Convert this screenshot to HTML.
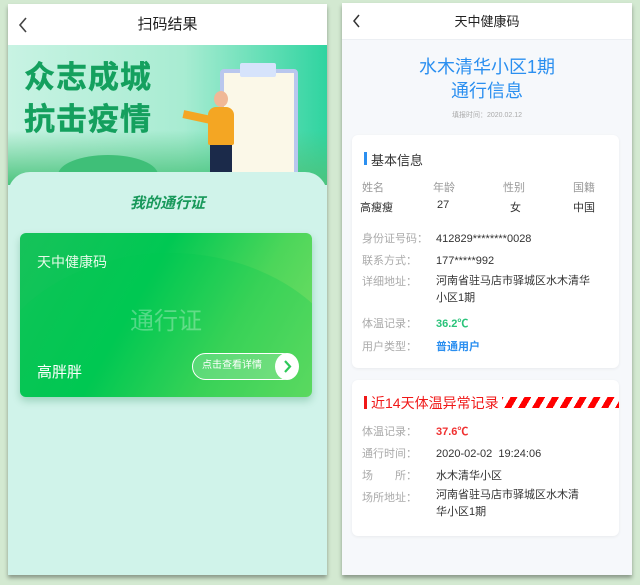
<!DOCTYPE html>
<html><head><meta charset="utf-8"><style>
*{margin:0;padding:0;box-sizing:border-box}
body{width:640px;height:585px;background:#d3e9d1;position:relative;overflow:hidden;font-family:"Liberation Sans","Noto Sans CJK SC",sans-serif}
.ph{position:absolute;box-shadow:0 3px 4px rgba(0,0,0,.35)}
.abs{position:absolute}
</style></head><body>
<!-- Left phone -->
<div class="ph" style="left:8px;top:4px;width:319px;height:571px;background:#d0f3ea;overflow:hidden">
  <div class="abs" style="left:0;top:0;width:319px;height:41px;background:#fff;text-align:center;line-height:41px;font-size:15px;color:#222">扫码结果
    <svg class="abs" style="left:10px;top:13px" width="10" height="16"><path d="M8 1L2 8L8 15" stroke="#444" stroke-width="1.6" fill="none"/></svg>
  </div>
  <div class="abs" style="left:0;top:41px;width:319px;height:140px;background:linear-gradient(90deg,#c8f3e3 0%,#a8ecd2 55%,#2fd4a0 100%)">
    <div class="abs" style="left:0;top:85px;width:319px;height:55px;background:linear-gradient(180deg,rgba(60,190,120,.0),#4cc47e)"></div>
    <div class="abs" style="left:16px;top:12px;font-size:31px;font-weight:bold;color:#14a05e;line-height:42px;letter-spacing:1px;-webkit-text-stroke:0.4px #14a05e">众志成城<br>抗击疫情</div>
    <div class="abs" style="left:212px;top:24px;width:78px;height:108px;background:#fbf8e8;border:4px solid #b9c7ee;border-radius:4px"></div>
    <div class="abs" style="left:232px;top:18px;width:36px;height:14px;background:#d6e3fb;border-radius:2px"></div>
    <div class="abs" style="left:200px;top:62px;width:26px;height:38px;background:#f4a623;border-radius:8px 8px 2px 2px"></div>
    <div class="abs" style="left:206px;top:46px;width:14px;height:16px;background:#f0b896;border-radius:50%"></div>
    <div class="abs" style="left:202px;top:100px;width:22px;height:40px;background:#1b2a4a"></div>
    <div class="abs" style="left:175px;top:68px;width:28px;height:8px;background:#f4a623;transform:rotate(12deg)"></div>
    <div class="abs" style="left:50px;top:110px;width:100px;height:40px;background:#3fbf78;border-radius:50% 50% 0 0"></div>
  </div>
  <div class="abs" style="left:0;top:168px;width:319px;height:410px;background:#d0f3ea;border-radius:22px 22px 0 0"></div>
  <div class="abs" style="left:0;top:188px;width:319px;text-align:center;font-size:15px;font-weight:bold;font-style:italic;color:#17985a">我的通行证</div>
  <div class="abs" style="left:12px;top:229px;width:292px;height:164px;border-radius:6px;background:linear-gradient(120deg,#17c25a 0%,#00c853 40%,#4cd65a 70%,#7adf66 100%);box-shadow:0 4px 8px rgba(0,120,60,.25);overflow:hidden">
    <div class="abs" style="left:-40px;top:20px;width:380px;height:300px;border-radius:50%;background:rgba(0,200,80,.25)"></div>
    <div class="abs" style="left:17px;top:19px;font-size:14px;color:#e6fbe9">天中健康码</div>
    <div class="abs" style="left:0;top:68px;width:292px;text-align:center;font-size:24px;color:rgba(255,255,255,.3)">通行证</div>
    <div class="abs" style="left:17px;top:128px;font-size:15px;color:#fff">高胖胖</div>
    <div class="abs" style="left:172px;top:120px;width:104px;height:27px;border:1.5px solid #fff;border-radius:14px;background:rgba(255,255,255,.2);font-size:10px;color:#fff;line-height:24px;padding-left:9px">点击查看详情</div>
    <div class="abs" style="left:255px;top:120px;width:24px;height:27px;border-radius:50%;background:#fff"><svg width="24" height="27"><path d="M10 8L15 13.5L10 19" stroke="#2ec85a" stroke-width="2.2" fill="none"/></svg></div>
  </div>
</div>
<!-- Right phone -->
<div class="ph" style="left:342px;top:3px;width:290px;height:572px;background:#f6f8fb">
  <div class="abs" style="left:0;top:0;width:290px;height:37px;background:#fff;border-bottom:1px solid #eceff3;text-align:center;line-height:37px;font-size:13px;color:#222">天中健康码
    <svg class="abs" style="left:10px;top:11px" width="9" height="14"><path d="M7 1L2 7L7 13" stroke="#333" stroke-width="1.5" fill="none"/></svg>
  </div>
  <div class="abs" style="left:0;top:52px;width:290px;text-align:center;font-size:18px;color:#2b8ff0;line-height:24px">水木清华小区1期<br>通行信息</div>
  <div class="abs" style="left:0;top:107px;width:290px;text-align:center;font-size:7px;color:#aaa">填报时间：2020.02.12</div>
  <div class="abs" style="left:10px;top:132px;width:267px;height:233px;background:#fff;border-radius:6px;box-shadow:0 1px 3px rgba(0,0,0,.06);font-size:11px;color:#333">
    <div class="abs" style="left:12px;top:17px;width:3px;height:13px;background:#2b8ff0"></div>
    <div class="abs" style="left:19px;top:15px;font-size:13px;color:#333">基本信息</div>
    <div class="abs" style="left:10px;top:44px;color:#999">姓名</div><div class="abs" style="left:8px;top:64px">高瘦瘦</div>
    <div class="abs" style="left:81px;top:44px;color:#999">年龄</div><div class="abs" style="left:85px;top:64px">27</div>
    <div class="abs" style="left:151px;top:44px;color:#999">性别</div><div class="abs" style="left:158px;top:64px">女</div>
    <div class="abs" style="left:221px;top:44px;color:#999">国籍</div><div class="abs" style="left:221px;top:64px">中国</div>
    <div class="abs" style="left:10px;top:94px;color:#aaa;line-height:21.5px">身份证号码：<br>联系方式：<br>详细地址：</div>
    <div class="abs" style="left:84px;top:94px;line-height:21.5px;width:180px">412829********0028<br>177*****992</div>
    <div class="abs" style="left:84px;top:138px;line-height:17px;width:180px">河南省驻马店市驿城区水木清华<br>小区1期</div>
    <div class="abs" style="left:10px;top:178px;color:#aaa;line-height:23px">体温记录：<br>用户类型：</div>
    <div class="abs" style="left:84px;top:178px;line-height:23px"><span style="color:#2ac37a;font-weight:bold">36.2℃</span><br><span style="color:#2b8ff0;font-weight:bold">普通用户</span></div>
  </div>
  <div class="abs" style="left:10px;top:377px;width:267px;height:156px;background:#fff;border-radius:6px;box-shadow:0 1px 3px rgba(0,0,0,.06);font-size:11px;color:#333;overflow:hidden">
    <div class="abs" style="left:12px;top:16px;width:3px;height:13px;background:#f01818"></div>
    <div class="abs" style="left:19px;top:13px;font-size:14px;color:#f01818">近14天体温异常记录</div>
    <div class="abs" style="left:150px;top:17px;width:120px;height:11px;background:repeating-linear-gradient(-60deg,#f00 0 6px,#fff 6px 12px)"></div>
    <div class="abs" style="left:10px;top:41px;color:#aaa;line-height:22px">体温记录：<br>通行时间：<br>场&emsp;&emsp;所：<br>场所地址：</div>
    <div class="abs" style="left:84px;top:41px;line-height:22px;width:150px">
      <span style="color:#f03030;font-weight:bold">37.6℃</span><br>2020-02-02&nbsp;&nbsp;19:24:06<br>水木清华小区</div>
    <div class="abs" style="left:84px;top:107px;line-height:17px;width:150px">河南省驻马店市驿城区水木清<br>华小区1期</div>
  </div>
</div>
</body></html>
